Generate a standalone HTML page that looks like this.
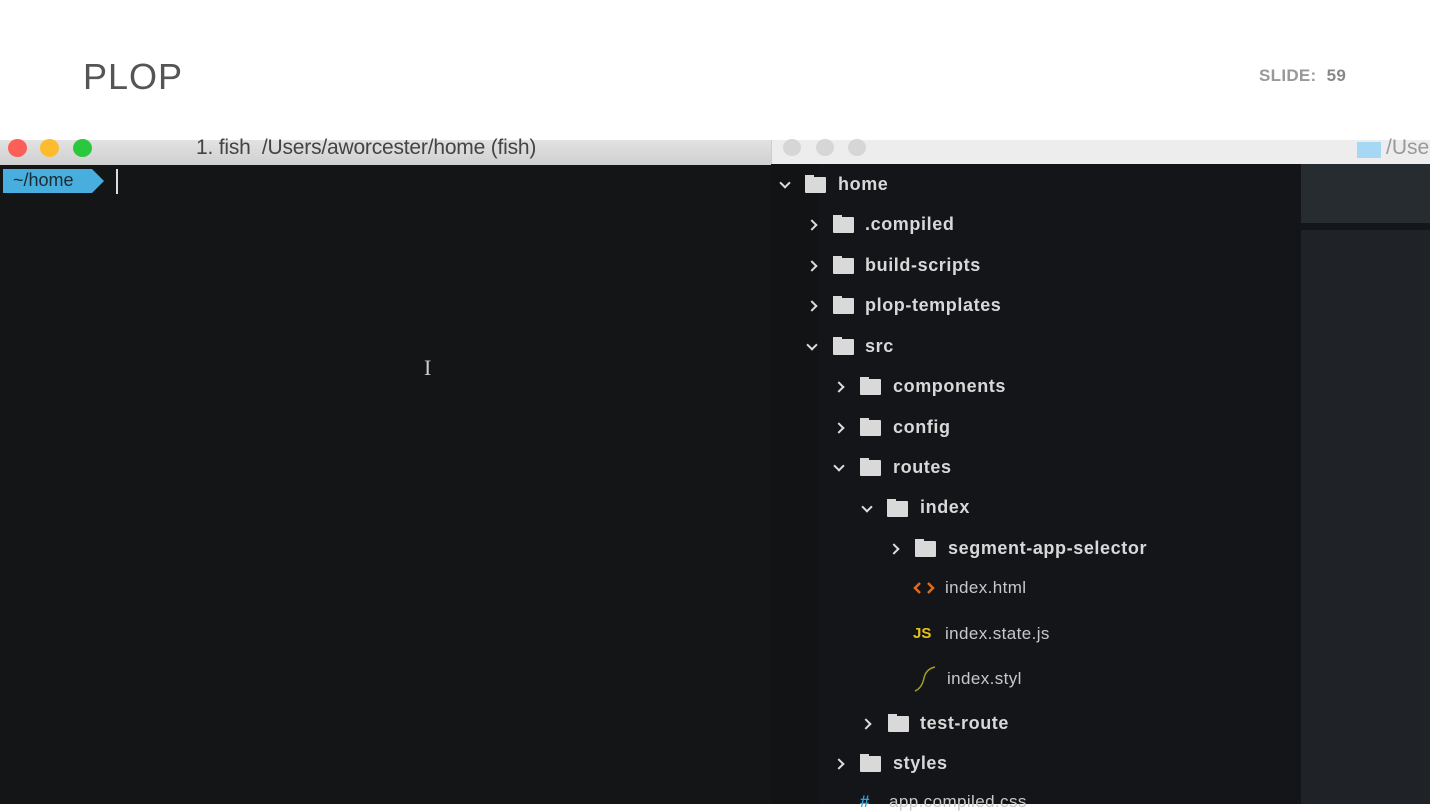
<!DOCTYPE html>
<html><head><meta charset="utf-8"><style>
*{margin:0;padding:0;box-sizing:border-box}
body{width:1430px;height:804px;overflow:hidden;background:#fff;font-family:"Liberation Sans",sans-serif;position:relative}
.a{position:absolute}
.t{color:#d8d8d8;font-size:18px;font-weight:bold;letter-spacing:0.6px}
.f{color:#c8c8c8;font-size:17px;letter-spacing:0.4px}
.fold{position:absolute;width:21px;height:16px;background:#d9d9d9;border-radius:1px}
.fold:before{content:"";position:absolute;left:0;top:-2px;width:9px;height:3px;background:#d9d9d9}
.r,.d{position:absolute;width:10px;height:10px}
.r:after,.d:after{content:"";position:absolute;width:6px;height:6px;border-right:2.5px solid #ddd;border-bottom:2.5px solid #ddd}
.r:after{transform:rotate(-45deg);left:0;top:2px}
.d:after{transform:rotate(45deg);left:2px;top:0}
</style></head><body>
<div class="a" style="left:83px;top:56px;font-size:36px;color:#555;letter-spacing:1px">PLOP</div>
<div class="a" style="left:1259px;top:66px;font-size:17px;color:#999;font-weight:bold;letter-spacing:0.3px">SLIDE:&nbsp; <span style="color:#888">59</span></div>

<div class="a" style="left:0;top:140px;width:771px;height:25px;background:linear-gradient(#e2e2e2,#d0d0d0)"></div>
<div class="a" style="left:8px;top:139px;width:19px;height:18px;border-radius:50%;background:#fc5f57"></div>
<div class="a" style="left:40px;top:139px;width:19px;height:18px;border-radius:50%;background:#fdbc2e"></div>
<div class="a" style="left:73px;top:139px;width:19px;height:18px;border-radius:50%;background:#29c83f"></div>
<div class="a" style="left:196px;top:136px;font-size:21px;color:#444;letter-spacing:-0.2px">1. fish &nbsp;/Users/aworcester/home (fish)</div>
<div class="a" style="left:0;top:165px;width:771px;height:639px;background:#141517"></div>
<div class="a" style="left:3px;top:169px;width:89px;height:24px;background:#48aede"></div>
<div class="a" style="left:92px;top:169px;width:0;height:0;border-top:12px solid transparent;border-bottom:12px solid transparent;border-left:12px solid #48aede"></div>
<div class="a" style="left:13px;top:170px;font-size:18px;color:#1b2a33">~/home</div>
<div class="a" style="left:116px;top:169px;width:2px;height:25px;background:#ddd"></div>
<div class="a" style="left:424px;top:355px;font-size:22px;color:#ccc;font-family:'Liberation Serif',serif">I</div>

<div class="a" style="left:771px;top:140px;width:659px;height:24px;background:#ededed;border-left:1px solid #ccc"></div>
<div class="a" style="left:783px;top:139px;width:18px;height:17px;border-radius:50%;background:#d6d6d6"></div>
<div class="a" style="left:816px;top:139px;width:18px;height:17px;border-radius:50%;background:#d6d6d6"></div>
<div class="a" style="left:848px;top:139px;width:18px;height:17px;border-radius:50%;background:#d6d6d6"></div>
<div class="a" style="left:1357px;top:142px;width:24px;height:16px;background:#a6d8f5"></div>
<div class="a" style="left:1386px;top:136px;font-size:21px;color:#999">/Use</div>
<div class="a" style="left:771px;top:164px;width:530px;height:640px;background:#141518"></div>
<div class="a" style="left:771px;top:164px;width:48px;height:640px;background:#121315"></div>
<div class="a" style="left:1301px;top:164px;width:129px;height:59px;background:#272c30"></div>
<div class="a" style="left:1301px;top:223px;width:129px;height:7px;background:#141619"></div>
<div class="a" style="left:1301px;top:230px;width:129px;height:574px;background:#1f2327"></div>

<div class="d" style="left:779px;top:179px"></div><div class="fold" style="left:805px;top:177px"></div><div class="a t" style="left:838px;top:174px">home</div>
<div class="r" style="left:808px;top:219px"></div><div class="fold" style="left:833px;top:217px"></div><div class="a t" style="left:865px;top:214px">.compiled</div>
<div class="r" style="left:808px;top:260px"></div><div class="fold" style="left:833px;top:258px"></div><div class="a t" style="left:865px;top:255px">build-scripts</div>
<div class="r" style="left:808px;top:300px"></div><div class="fold" style="left:833px;top:298px"></div><div class="a t" style="left:865px;top:295px">plop-templates</div>
<div class="d" style="left:806px;top:341px"></div><div class="fold" style="left:833px;top:339px"></div><div class="a t" style="left:865px;top:336px">src</div>
<div class="r" style="left:835px;top:381px"></div><div class="fold" style="left:860px;top:379px"></div><div class="a t" style="left:893px;top:376px">components</div>
<div class="r" style="left:835px;top:422px"></div><div class="fold" style="left:860px;top:420px"></div><div class="a t" style="left:893px;top:417px">config</div>
<div class="d" style="left:833px;top:462px"></div><div class="fold" style="left:860px;top:460px"></div><div class="a t" style="left:893px;top:457px">routes</div>
<div class="d" style="left:861px;top:503px"></div><div class="fold" style="left:887px;top:501px"></div><div class="a t" style="left:920px;top:497px">index</div>
<div class="r" style="left:890px;top:543px"></div><div class="fold" style="left:915px;top:541px"></div><div class="a t" style="left:948px;top:538px">segment-app-selector</div>
<svg class="a" style="left:913px;top:580px" width="22" height="16"><path d="M7 3 L2 8 L7 13 M15 3 L20 8 L15 13" stroke="#e06a1c" stroke-width="2.5" fill="none"/></svg><div class="a f" style="left:945px;top:578px">index.html</div>
<div class="a" style="left:913px;top:625px;color:#e8c21c;font-size:15px;font-weight:bold">JS</div><div class="a f" style="left:945px;top:624px">index.state.js</div>
<svg class="a" style="left:912px;top:664px" width="26" height="30"><path d="M3 27 Q10 24 12 14 Q14 5 23 3" stroke="#a0a020" stroke-width="1.5" fill="none"/></svg><div class="a f" style="left:947px;top:669px">index.styl</div>
<div class="r" style="left:862px;top:718px"></div><div class="fold" style="left:888px;top:716px"></div><div class="a t" style="left:920px;top:713px">test-route</div>
<div class="r" style="left:835px;top:758px"></div><div class="fold" style="left:860px;top:756px"></div><div class="a t" style="left:893px;top:753px">styles</div>
<div class="a" style="left:860px;top:792px;color:#2aa3e0;font-size:17px;font-weight:bold">#</div><div class="a f" style="left:889px;top:792px">app.compiled.css</div>
</body></html>
